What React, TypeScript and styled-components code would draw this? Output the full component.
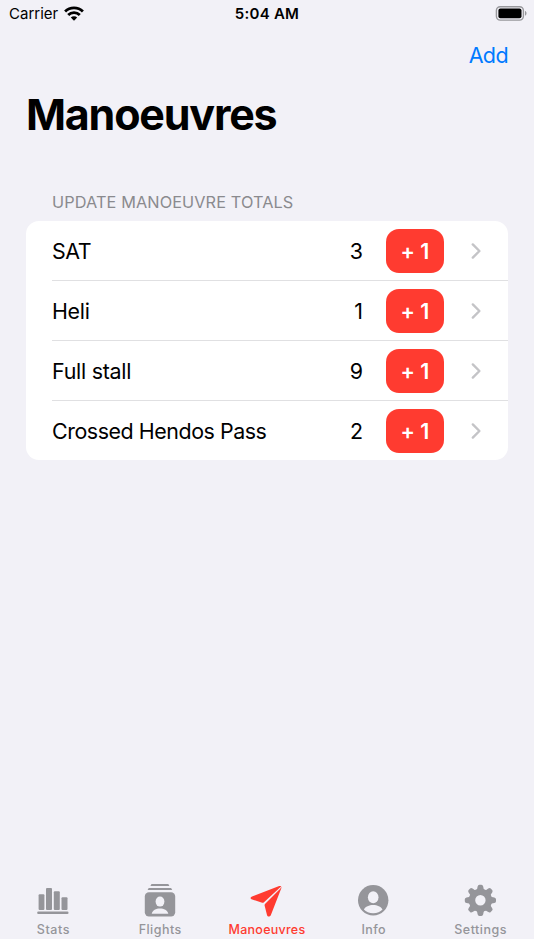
import React from "react";
import styled, { createGlobalStyle } from "styled-components";

const BG = "#f2f1f7";
const GREY = "#95959a";
const RED = "#ff3b30";

const GlobalStyle = createGlobalStyle`
  * { box-sizing: border-box; }
  body { margin: 0; background: #fff; }
  button { border: 0; padding: 0; background: none; font: inherit; }
`;

const Screen = styled.div`
  display: flex;
  flex-direction: column;
  width: 534px;
  height: 939px;
  background: ${BG};
  color: #000;
  font-family: Inter, "Liberation Sans", sans-serif;
`;

const StatusBar = styled.header`
  display: grid;
  grid-template-columns: 1fr auto 1fr;
  align-items: center;
  height: 27px;
  padding: 0 7px 0 9px;
`;

const Carrier = styled.div`
  display: flex;
  align-items: center;
  gap: 6px;
  font-size: 15px;
`;

const Clock = styled.div`
  margin-left: -2px;
  font-size: 15px;
  font-weight: 600;
  letter-spacing: 0.25px;
`;

const BatteryIcon = styled.svg`
  justify-self: end;
`;

const NavBar = styled.nav`
  display: flex;
  justify-content: flex-end;
  align-items: center;
  height: 55px;
  padding-right: 26px;
`;

const AddButton = styled.button`
  color: #007aff;
  font-size: 21.5px;
  letter-spacing: -0.6px;
`;

const Title = styled.h1`
  margin: 0;
  padding-left: 26px;
  height: 64px;
  line-height: 64px;
  font-size: 43px;
  font-weight: 700;
  letter-spacing: -1.2px;
`;

const Main = styled.main`
  flex: 1;
  padding: 45px 26px 0;
`;

const SectionLabel = styled.h2`
  margin: 0;
  padding-left: 26px;
  height: 30px;
  line-height: 23px;
  color: #8a8a8e;
  font-size: 16.3px;
  font-weight: 400;
  letter-spacing: 0.1px;
`;

const List = styled.ul`
  margin: 0;
  padding: 0;
  list-style: none;
  border-radius: 13px;
  background: #fff;
  overflow: hidden;
`;

const Row = styled.li`
  display: flex;
  align-items: center;
  height: 60px;
  margin-left: 26px;
  padding: 1px 26px 0 0;
  font-size: 21.4px;
  &:not(:last-child) { border-bottom: 1px solid #e0e0e2; }
  &:last-child { height: 59px; padding-top: 0; }
`;

const Name = styled.span<{ $tracking: number }>`
  flex: 1;
  letter-spacing: ${(p) => p.$tracking}px;
`;

const Count = styled.span`
  margin-right: 23px;
`;

const PlusButton = styled.button`
  width: 58px;
  height: 44px;
  margin-right: 27px;
  border-radius: 13px;
  background: ${RED};
  color: #fff;
  font-weight: 600;
  font-feature-settings: "calt" 0;
`;

const TabBar = styled.nav`
  display: grid;
  grid-template-columns: repeat(5, 1fr);
  height: 57px;
`;

const Tab = styled.button<{ $active?: boolean }>`
  display: flex;
  flex-direction: column;
  align-items: center;
  color: ${(p) => (p.$active ? RED : GREY)};
  svg { display: block; }
`;

const TabLabel = styled.span<{ $tracking: number }>`
  height: 21px;
  line-height: 24px;
  font-size: 12.5px;
  font-weight: 500;
  letter-spacing: ${(p) => p.$tracking}px;
`;

const TabIcon = ({ children }: { children: React.ReactNode }) => (
  <svg width="36" height="36" viewBox="0 0 36 36" fill="currentColor">
    {children}
  </svg>
);

const WifiIcon = () => (
  <svg width="20" height="16" viewBox="0 0 20 16">
    <g fill="none" stroke="#000" strokeWidth="2.8">
      <path d="M1.1 5.6a12.6 12.6 0 0 1 17.8 0" />
      <path d="M4.2 9a8.1 8.1 0 0 1 11.6 0" />
    </g>
    <path d="M6.8 11.6a4.6 4.6 0 0 1 6.4 0L10 14.8z" />
  </svg>
);

const Chevron = () => (
  <svg width="11" height="18" viewBox="0 0 11 18">
    <path d="M1.8 2.4 8.4 9 1.8 15.6" fill="none" stroke="#c4c4c7" strokeWidth="2.4" strokeLinecap="round" strokeLinejoin="round" />
  </svg>
);

const StatsIcon = () => (
  <TabIcon>
    <rect x="3.6" y="12.3" width="5.8" height="15.6" rx="1" />
    <rect x="11" y="6.1" width="6" height="21.8" rx="1" />
    <rect x="18.8" y="9.2" width="6" height="18.7" rx="1" />
    <rect x="26.5" y="15.3" width="6" height="12.6" rx="1" />
    <rect x="2.2" y="29.6" width="31.3" height="2.4" rx="1.1" />
  </TabIcon>
);

const FlightsIcon = () => (
  <TabIcon>
    <path d="M9.5 2h16.8l1.1 2.1h-19zM6.7 5.9h22.4l1.1 2.2H5.6z" />
    <rect x="2.8" y="10.2" width="30.4" height="24.2" rx="4.2" />
    <ellipse cx="18" cy="19.6" rx="4.4" ry="5" fill={BG} />
    <path d="M9.7 31.8c.7-3.6 4.4-5.3 8.3-5.3s7.6 1.7 8.3 5.3z" fill={BG} />
  </TabIcon>
);

const PlaneIcon = () => (
  <TabIcon>
    <path d="M30.2 4.1 3 14.4c-2 .8-1.9 2.4.2 3l10 3.3q.9.3 1.5-.3L31 5.6l1.3-.8c-.3-.9-1.1-1.1-2.1-.7z" />
    <path d="M32.3 6.3 21.9 33.1c-.8 2-3.4 2-3.9-.1l-2.4-9.4q-.2-.9.4-1.5L31.2 6.8l1.2-1.8q.2.5-.1 1.3z" />
  </TabIcon>
);

const InfoIcon = () => (
  <TabIcon>
    <circle cx="17.2" cy="18.3" r="15.2" />
    <ellipse cx="17.2" cy="15.3" rx="5.3" ry="6" fill={BG} />
    <path d="M7.9 27.5c1.4-2.8 5.3-4.4 9.3-4.4s7.9 1.6 9.3 4.4c-2 2.1-5.5 3.7-9.3 3.7s-7.3-1.6-9.3-3.7z" fill={BG} />
  </TabIcon>
);

const GearIcon = () => (
  <TabIcon>
    {[0, 45, 90, 135, 180, 225, 270, 315].map((angle) => (
      <path
        key={angle}
        transform={`rotate(${angle} 17.4 18.3)`}
        d="M12.1 9.2q1.7-.8 2-2.3l.5-2.5q.4-1.7 1.8-1.7h2q1.4 0 1.8 1.7l.5 2.5q.3 1.5 2 2.3z"
      />
    ))}
    <circle cx="17.4" cy="18.3" r="8.4" fill="none" stroke="currentColor" strokeWidth="6.4" />
  </TabIcon>
);

const manoeuvres = [
  { name: "SAT", count: 3, tracking: -0.5 },
  { name: "Heli", count: 1, tracking: -0.3 },
  { name: "Full stall", count: 9, tracking: -0.25 },
  { name: "Crossed Hendos Pass", count: 2, tracking: -0.44 },
];

const tabs = [
  { label: "Stats", icon: <StatsIcon />, tracking: 0.55 },
  { label: "Flights", icon: <FlightsIcon />, tracking: 0.45 },
  { label: "Manoeuvres", icon: <PlaneIcon />, tracking: 0.25, active: true },
  { label: "Info", icon: <InfoIcon />, tracking: 0.4 },
  { label: "Settings", icon: <GearIcon />, tracking: 0.48 },
];

export default function App() {
  return (
    <>
      <GlobalStyle />
      <Screen>
        <StatusBar>
          <Carrier>
            Carrier
            <WifiIcon />
          </Carrier>
          <Clock>5:04 AM</Clock>
          <BatteryIcon width="32" height="16" viewBox="0 0 32 16">
            <rect x="1.4" y="0.7" width="27" height="13.4" rx="3.8" fill="none" stroke="#98989c" strokeWidth="1.4" />
            <rect x="3.4" y="2.6" width="23.1" height="9.6" rx="2" />
            <path d="M30 5.1c2 .7 2 4 0 4.7z" fill="#98989c" />
          </BatteryIcon>
        </StatusBar>
        <NavBar>
          <AddButton>Add</AddButton>
        </NavBar>
        <Title>Manoeuvres</Title>
        <Main>
          <SectionLabel>UPDATE MANOEUVRE TOTALS</SectionLabel>
          <List>
            {manoeuvres.map((m) => (
              <Row key={m.name}>
                <Name $tracking={m.tracking}>{m.name}</Name>
                <Count>{m.count}</Count>
                <PlusButton>+ 1</PlusButton>
                <Chevron />
              </Row>
            ))}
          </List>
        </Main>
        <TabBar>
          {tabs.map((t) => (
            <Tab key={t.label} $active={t.active}>
              {t.icon}
              <TabLabel $tracking={t.tracking}>{t.label}</TabLabel>
            </Tab>
          ))}
        </TabBar>
      </Screen>
    </>
  );
}
